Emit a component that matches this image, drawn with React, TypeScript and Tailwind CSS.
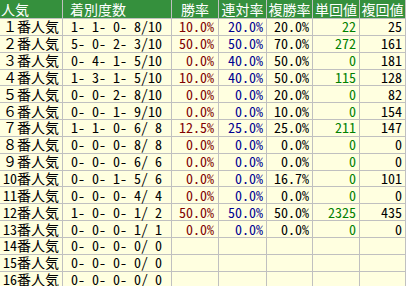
import React from "react";

type Row = [string, string, string, string, string, string, string];

const rows: Row[] = [
  ["１番人気", "1- 1- 0- 8/10", "10.0%", "20.0%", "20.0%", "22", "25"],
  ["２番人気", "5- 0- 2- 3/10", "50.0%", "50.0%", "70.0%", "272", "161"],
  ["３番人気", "0- 4- 1- 5/10", "0.0%", "40.0%", "50.0%", "0", "181"],
  ["４番人気", "1- 3- 1- 5/10", "10.0%", "40.0%", "50.0%", "115", "128"],
  ["５番人気", "0- 0- 2- 8/10", "0.0%", "0.0%", "20.0%", "0", "82"],
  ["６番人気", "0- 0- 1- 9/10", "0.0%", "0.0%", "10.0%", "0", "154"],
  ["７番人気", "1- 1- 0- 6/ 8", "12.5%", "25.0%", "25.0%", "211", "147"],
  ["８番人気", "0- 0- 0- 8/ 8", "0.0%", "0.0%", "0.0%", "0", "0"],
  ["９番人気", "0- 0- 0- 6/ 6", "0.0%", "0.0%", "0.0%", "0", "0"],
  ["10番人気", "0- 0- 1- 5/ 6", "0.0%", "0.0%", "16.7%", "0", "101"],
  ["11番人気", "0- 0- 0- 4/ 4", "0.0%", "0.0%", "0.0%", "0", "0"],
  ["12番人気", "1- 0- 0- 1/ 2", "50.0%", "50.0%", "50.0%", "2325", "435"],
  ["13番人気", "0- 0- 0- 1/ 1", "0.0%", "0.0%", "0.0%", "0", "0"],
  ["14番人気", "0- 0- 0- 0/ 0", "", "", "", "", ""],
  ["15番人気", "0- 0- 0- 0/ 0", "", "", "", "", ""],
  ["16番人気", "0- 0- 0- 0/ 0", "", "", "", "", ""],
];

const font = {
  fontFamily: '"Noto Sans Mono CJK JP", "Noto Sans CJK JP", "Liberation Mono", monospace',
};

export default function App() {
  return (
    <div className="w-[408px] h-[286px] overflow-hidden bg-white" style={font}>
      <div className="grid grid-cols-[62px_108px_46px_47px_45px_46px_45px] gap-px bg-[#c0c0c0] w-[406px] pr-px text-[14px] leading-[15px]">
        <div className="h-[18px] bg-[#35903d] text-white flex items-center pl-[1px]">人気</div>
        <div className="h-[18px] bg-[#35903d] text-white flex items-center pl-[7px]">着別度数</div>
        <div className="h-[18px] bg-[#35903d] text-white flex items-center justify-center">勝率</div>
        <div className="h-[18px] bg-[#35903d] text-white flex items-center justify-center">連対率</div>
        <div className="h-[18px] bg-[#35903d] text-white flex items-center justify-center">複勝率</div>
        <div className="h-[18px] bg-[#35903d] text-white flex items-center justify-center">単回値</div>
        <div className="h-[18px] bg-[#35903d] text-white flex items-center justify-center">複回値</div>
        {rows.map((r, i) => (
          <React.Fragment key={i}>
            <div className="h-[15.85px] bg-[#ffffe0] text-black flex items-center pl-[3px] whitespace-pre">{r[0]}</div>
            <div className="h-[15.85px] bg-[#ffffe0] text-black flex items-center pl-[8px] whitespace-pre">{r[1]}</div>
            <div className="h-[15.85px] bg-[#ffffe0] text-[#800000] flex items-center justify-end pr-[4px] whitespace-pre">{r[2]}</div>
            <div className="h-[15.85px] bg-[#ffffe0] text-[#000090] flex items-center justify-end pr-[3px] whitespace-pre">{r[3]}</div>
            <div className="h-[15.85px] bg-[#ffffe0] text-black flex items-center justify-end pr-[3px] whitespace-pre">{r[4]}</div>
            <div className="h-[15.85px] bg-[#ffffe0] text-[#008000] flex items-center justify-end pr-[3px] whitespace-pre">{r[5]}</div>
            <div className="h-[15.85px] bg-[#ffffe0] text-black flex items-center justify-end pr-[3px] whitespace-pre">{r[6]}</div>
          </React.Fragment>
        ))}
      </div>
    </div>
  );
}
